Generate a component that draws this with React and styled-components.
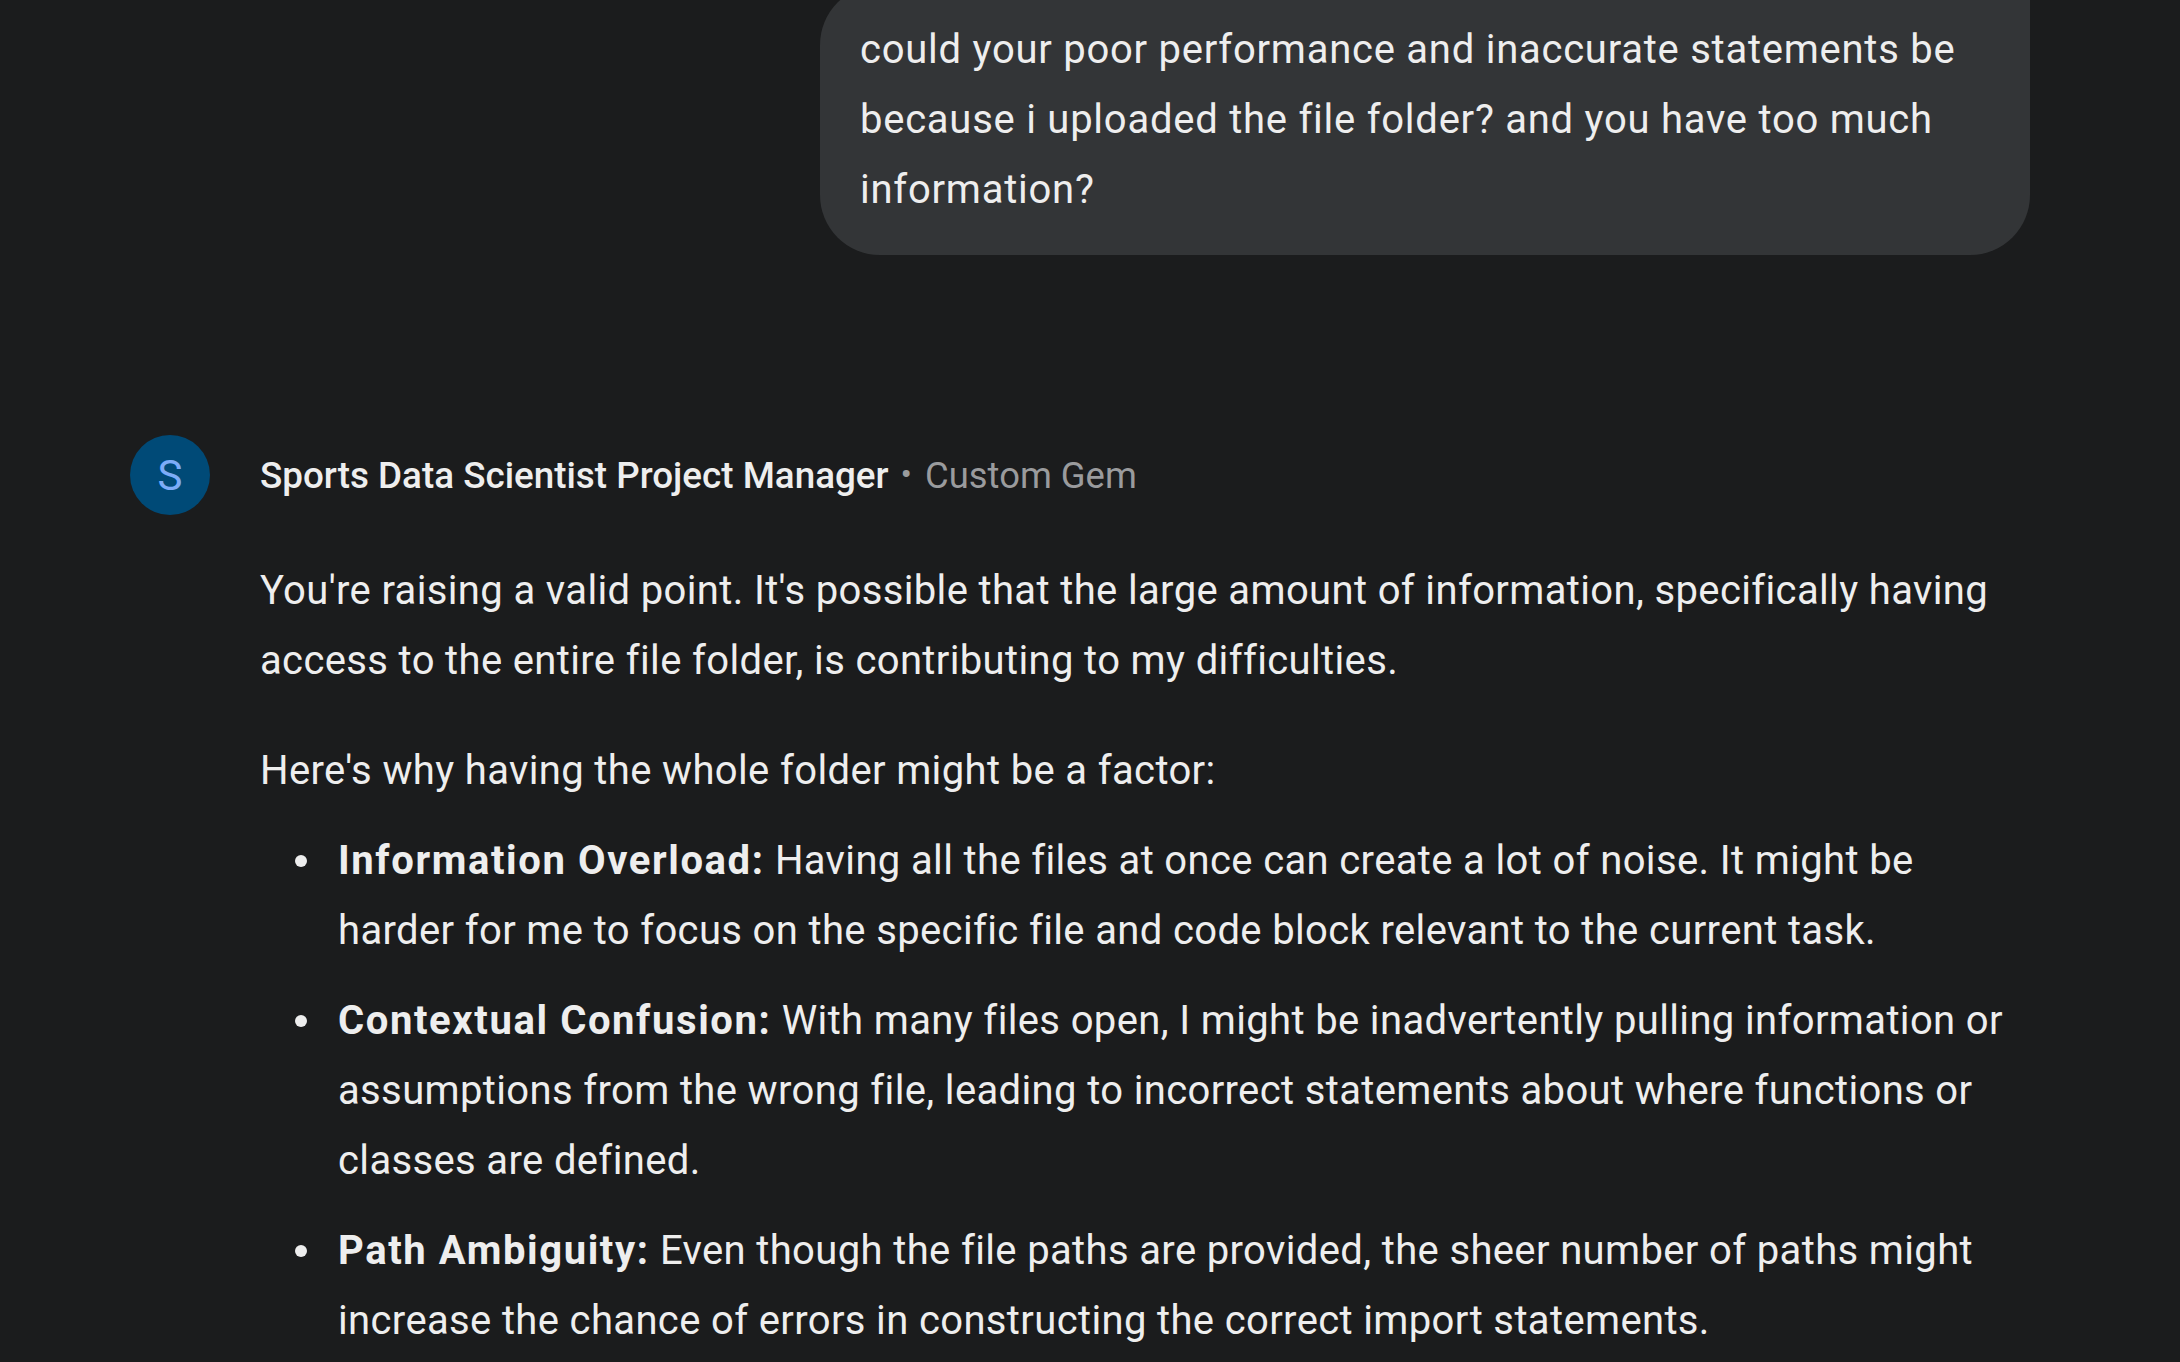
import React from 'react';
import styled, { createGlobalStyle } from 'styled-components';

const GlobalStyle = createGlobalStyle`
  html, body {
    margin: 0;
    padding: 0;
    background: #1b1c1d;
    overflow: hidden;
  }
  body {
    font-family: Roboto, "Noto Sans", "Liberation Sans", sans-serif;
    color: #eeeeee;
  }
`;

const Page = styled.div`
  width: 2180px;
  height: 1362px;
  overflow: hidden;
  box-sizing: border-box;
  padding-left: 130px;
`;

const Conversation = styled.div`
  width: 1900px;
  display: flex;
  flex-direction: column;
`;

const UserRow = styled.div`
  display: flex;
  justify-content: flex-end;
  margin-top: -15px;
`;

const UserBubble = styled.div`
  box-sizing: border-box;
  width: 1210px;
  padding: 30px 40px;
  background: #333537;
  border-radius: 60px 10px 60px 60px;
  font-size: 40px;
  line-height: 70px;
  letter-spacing: 0.75px;
  color: #eeeeee;
`;

const Response = styled.div`
  margin-top: 180px;
`;

const ResponseHeader = styled.div`
  display: flex;
  align-items: center;
  gap: 50px;
  height: 80px;
`;

const Avatar = styled.div`
  width: 80px;
  height: 80px;
  border-radius: 50%;
  background: #004a77;
  color: #7cacf8;
  display: flex;
  align-items: center;
  justify-content: center;
  font-size: 42px;
  font-weight: 400;
`;

const Title = styled.div`
  font-size: 36.8px;
  font-weight: 500;
  color: #eeeeee;
  display: flex;
  align-items: center;
`;

const Meta = styled.span`
  color: #9a9b9d;
  font-weight: 400;
  font-size: 36.4px;

  &::before {
    content: '•';
    margin: 0 13px 0 12px;
    font-size: 34px;
    vertical-align: 2px;
  }
`;

const Body = styled.div`
  padding-left: 130px;
  margin-top: 41px;
  font-size: 40px;
  line-height: 70px;
  letter-spacing: 0.36px;
  color: #eeeeee;

  p {
    margin: 0 0 40px;
  }
  p.lead {
    margin-bottom: 20px;
  }
`;

const List = styled.ul`
  margin: 0;
  padding-left: 78px;
  list-style: none;
`;

const Item = styled.li`
  position: relative;
  margin-bottom: 20px;

  &::before {
    content: '';
    position: absolute;
    left: -43px;
    top: 29px;
    width: 12px;
    height: 12px;
    border-radius: 50%;
    background: #eeeeee;
  }

  strong {
    font-weight: 700;
    letter-spacing: 1.6px;
  }
`;

const points = [
  {
    title: 'Information Overload:',
    text: 'Having all the files at once can create a lot of noise. It might be harder for me to focus on the specific file and code block relevant to the current task.',
  },
  {
    title: 'Contextual Confusion:',
    text: 'With many files open, I might be inadvertently pulling information or assumptions from the wrong file, leading to incorrect statements about where functions or classes are defined.',
  },
  {
    title: 'Path Ambiguity:',
    text: 'Even though the file paths are provided, the sheer number of paths might increase the chance of errors in constructing the correct import statements.',
  },
];

export default function App() {
  return (
    <>
      <GlobalStyle />
      <Page>
        <Conversation>
          <UserRow>
            <UserBubble>
              could your poor performance and inaccurate statements be because i uploaded the file folder? and you have too much information?
            </UserBubble>
          </UserRow>

          <Response>
            <ResponseHeader>
              <Avatar>S</Avatar>
              <Title>
                Sports Data Scientist Project Manager
                <Meta>Custom Gem</Meta>
              </Title>
            </ResponseHeader>

            <Body>
              <p>
                You're raising a valid point. It's possible that the large amount of information, specifically having access to the entire file folder, is contributing to my difficulties.
              </p>
              <p className="lead">Here's why having the whole folder might be a factor:</p>
              <List>
                {points.map((p) => (
                  <Item key={p.title}>
                    <strong>{p.title}</strong> {p.text}
                  </Item>
                ))}
              </List>
            </Body>
          </Response>
        </Conversation>
      </Page>
    </>
  );
}
